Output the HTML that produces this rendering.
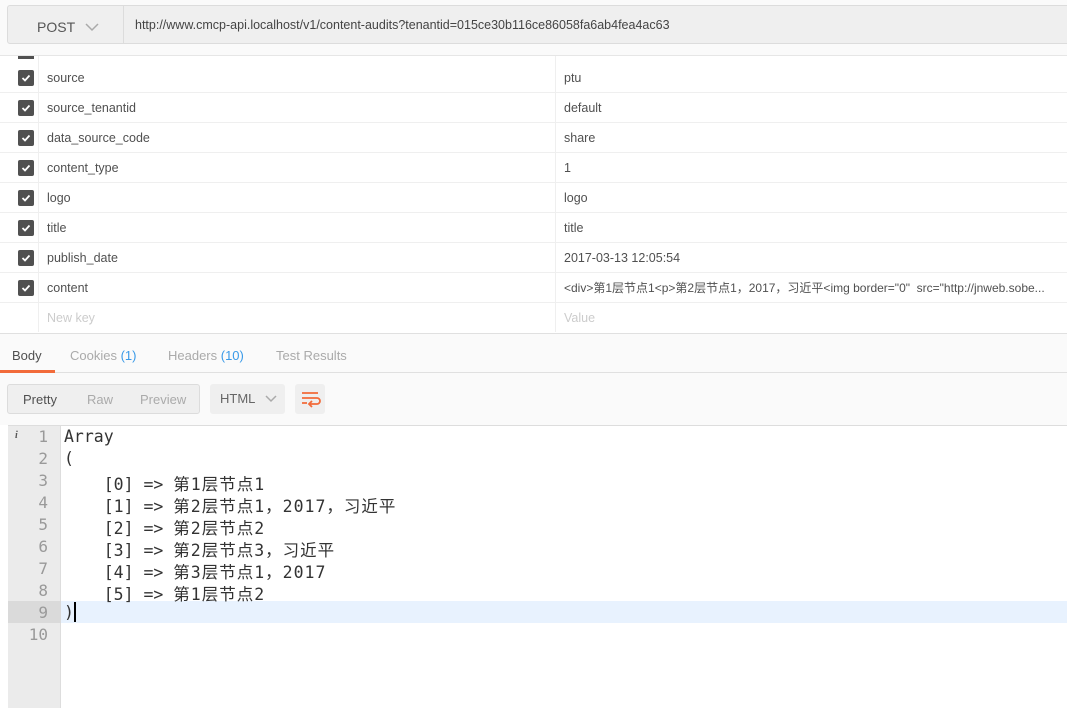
<!DOCTYPE html>
<html><head><meta charset="utf-8"><style>
*{box-sizing:border-box;margin:0;padding:0}
body{width:1067px;height:708px;overflow:hidden;background:#fff;font-family:"Liberation Sans","Noto Sans CJK SC",sans-serif;font-size:13px;color:#505050;position:relative}
.top{position:absolute;left:0;top:0;width:1067px;height:56px;background:#fafafa;border-bottom:1px solid #e6e6e6}
.method{position:absolute;left:7px;top:5px;width:117px;height:39px;background:#efefef;border:1px solid #dcdcdc;border-radius:3px 0 0 3px;font-size:14px;color:#555;padding:13px 0 0 29px}
.url{position:absolute;left:123px;top:5px;width:950px;height:39px;background:#efefef;border:1px solid #dcdcdc;padding:12px 0 0 11px;font-size:12.5px;color:#444}
.row{position:absolute;left:0;width:1067px;height:30px;border-bottom:1px solid #efefef}
.cb{position:absolute;left:18px;top:7px;width:16px;height:16px;background:#505050;border-radius:2px}
.cb svg{position:absolute;left:3px;top:3px}
.k{position:absolute;left:47px;top:8px;font-size:12.5px}
.v{position:absolute;left:564px;top:8px;font-size:12.5px;white-space:nowrap}
.div1{position:absolute;left:38px;top:56px;width:1px;height:276px;background:#efefef}
.div2{position:absolute;left:555px;top:56px;width:1px;height:276px;background:#efefef}
.tabs{position:absolute;left:0;top:333px;width:1067px;height:40px;background:#fafafa;border-top:1px solid #e0e0e0;border-bottom:1px solid #e0e0e0}
.tab{position:absolute;top:14px;font-size:13px;color:#aaa}
.tab b{font-weight:normal;color:#3a9ae8}
.bar{position:absolute;left:0;top:373px;width:1067px;height:52px;background:#fafafa}
.seg{position:absolute;left:7px;top:384px;width:193px;height:30px;background:#efefef;border:1px solid #dcdcdc;border-radius:3px;font-size:13px;color:#aaa}
.seg span{position:absolute;top:7px}
.html{position:absolute;left:210px;top:384px;width:75px;height:30px;background:#efefef;border-radius:3px;font-size:13px;color:#666;padding:7px 0 0 10px}
.wrap{position:absolute;left:295px;top:384px;width:30px;height:30px;background:#efefef;border-radius:3px}
.gut{position:absolute;left:8px;top:425px;width:53px;height:283px;background:#ebebeb;border-right:1px solid #ddd}
.ed{position:absolute;left:8px;top:425px;width:1059px;height:1px;background:#ddd}
.ln{position:absolute;left:8px;width:40px;text-align:right;font-family:"DejaVu Sans Mono","Noto Sans CJK SC",monospace;font-size:16px;color:#999}
.code{position:absolute;left:64px;font-family:"DejaVu Sans Mono","Noto Sans CJK SC",monospace;font-size:16.5px;color:#333;white-space:pre}
.code .c{letter-spacing:1px}
</style></head><body>
<div class="top">
<div class="method">POST <svg width="14" height="10" style="margin-left:6px" viewBox="0 0 14 10"><path d="M1 2l6 6 6-6" stroke="#aaa" stroke-width="1.5" fill="none"/></svg></div>
<div class="url">http://www.cmcp-api.localhost/v1/content-audits?tenantid=015ce30b116ce86058fa6ab4fea4ac63</div>
</div>
<div style="position:absolute;left:18px;top:56px;width:16px;height:3px;background:#505050"></div>
<div class="div1"></div><div class="div2"></div>
<div class="row" style="top:63px"><div class="cb"><svg width="10" height="10"><path d="M1.5 5l2.5 2.5 4.5-5" stroke="#fff" stroke-width="1.8" fill="none"/></svg></div><div class="k">source</div><div class="v">ptu</div></div>
<div class="row" style="top:93px"><div class="cb"><svg width="10" height="10"><path d="M1.5 5l2.5 2.5 4.5-5" stroke="#fff" stroke-width="1.8" fill="none"/></svg></div><div class="k">source_tenantid</div><div class="v">default</div></div>
<div class="row" style="top:123px"><div class="cb"><svg width="10" height="10"><path d="M1.5 5l2.5 2.5 4.5-5" stroke="#fff" stroke-width="1.8" fill="none"/></svg></div><div class="k">data_source_code</div><div class="v">share</div></div>
<div class="row" style="top:153px"><div class="cb"><svg width="10" height="10"><path d="M1.5 5l2.5 2.5 4.5-5" stroke="#fff" stroke-width="1.8" fill="none"/></svg></div><div class="k">content_type</div><div class="v">1</div></div>
<div class="row" style="top:183px"><div class="cb"><svg width="10" height="10"><path d="M1.5 5l2.5 2.5 4.5-5" stroke="#fff" stroke-width="1.8" fill="none"/></svg></div><div class="k">logo</div><div class="v">logo</div></div>
<div class="row" style="top:213px"><div class="cb"><svg width="10" height="10"><path d="M1.5 5l2.5 2.5 4.5-5" stroke="#fff" stroke-width="1.8" fill="none"/></svg></div><div class="k">title</div><div class="v">title</div></div>
<div class="row" style="top:243px"><div class="cb"><svg width="10" height="10"><path d="M1.5 5l2.5 2.5 4.5-5" stroke="#fff" stroke-width="1.8" fill="none"/></svg></div><div class="k">publish_date</div><div class="v">2017-03-13 12:05:54</div></div>
<div class="row" style="top:273px"><div class="cb"><svg width="10" height="10"><path d="M1.5 5l2.5 2.5 4.5-5" stroke="#fff" stroke-width="1.8" fill="none"/></svg></div><div class="k">content</div><div class="v" style="font-size:12px;top:6px">&lt;div&gt;第1层节点1&lt;p&gt;第2层节点1，2017，习近平&lt;img border="0"&nbsp; src="http://jnweb.sobe...</div></div>
<div class="row" style="top:303px;border:none"><div class="k" style="color:#ccc">New key</div><div class="v" style="color:#ccc">Value</div></div>
<div class="tabs">
<div class="tab" style="left:12px;color:#505050">Body</div>
<div style="position:absolute;left:0;top:36px;width:55px;height:3px;background:#f26b3a"></div>
<div class="tab" style="left:70px">Cookies <b>(1)</b></div>
<div class="tab" style="left:168px">Headers <b>(10)</b></div>
<div class="tab" style="left:276px">Test Results</div>
</div>
<div class="bar"></div>
<div class="seg"><span style="left:15px;color:#505050">Pretty</span><span style="left:79px">Raw</span><span style="left:132px">Preview</span></div>
<div class="html">HTML <svg width="12" height="8" style="margin-left:6px" viewBox="0 0 12 8"><path d="M1 1l5 5 5-5" stroke="#aaa" stroke-width="1.5" fill="none"/></svg></div>
<div class="wrap"><svg width="30" height="30"><path d="M7 9h16M7 14h15a3 3 0 0 1 0 6h-7M7 19h5M17 17l-3 3 3 3" stroke="#f26b3a" stroke-width="1.8" fill="none"/></svg></div>
<div class="gut"></div>
<div class="ed"></div>
<div style="position:absolute;left:8px;top:601px;width:53px;height:22px;background:#dadada"></div>
<div style="position:absolute;left:61px;top:601px;width:1006px;height:22px;background:#e8f2fe"></div>
<div style="position:absolute;left:15px;top:430px;font-size:10px;font-style:italic;font-family:'Liberation Serif',serif;color:#555;font-weight:bold">i</div>
<div class="ln" style="top:427px">1</div><div class="ln" style="top:449px">2</div><div class="ln" style="top:471px">3</div><div class="ln" style="top:493px">4</div><div class="ln" style="top:515px">5</div><div class="ln" style="top:537px">6</div><div class="ln" style="top:559px">7</div><div class="ln" style="top:581px">8</div><div class="ln" style="top:603px">9</div><div class="ln" style="top:625px">10</div>
<div class="code" style="top:427px">Array</div>
<div class="code" style="top:449px">(</div>
<div class="code" style="top:471px">    [0] => <span class="c">第1层节点1</span></div>
<div class="code" style="top:493px">    [1] => <span class="c">第2层节点1，2017，习近平</span></div>
<div class="code" style="top:515px">    [2] => <span class="c">第2层节点2</span></div>
<div class="code" style="top:537px">    [3] => <span class="c">第2层节点3，习近平</span></div>
<div class="code" style="top:559px">    [4] => <span class="c">第3层节点1，2017</span></div>
<div class="code" style="top:581px">    [5] => <span class="c">第1层节点2</span></div>
<div class="code" style="top:603px">)</div>
<div style="position:absolute;left:74px;top:602px;width:2px;height:20px;background:#000"></div>
</body></html>
